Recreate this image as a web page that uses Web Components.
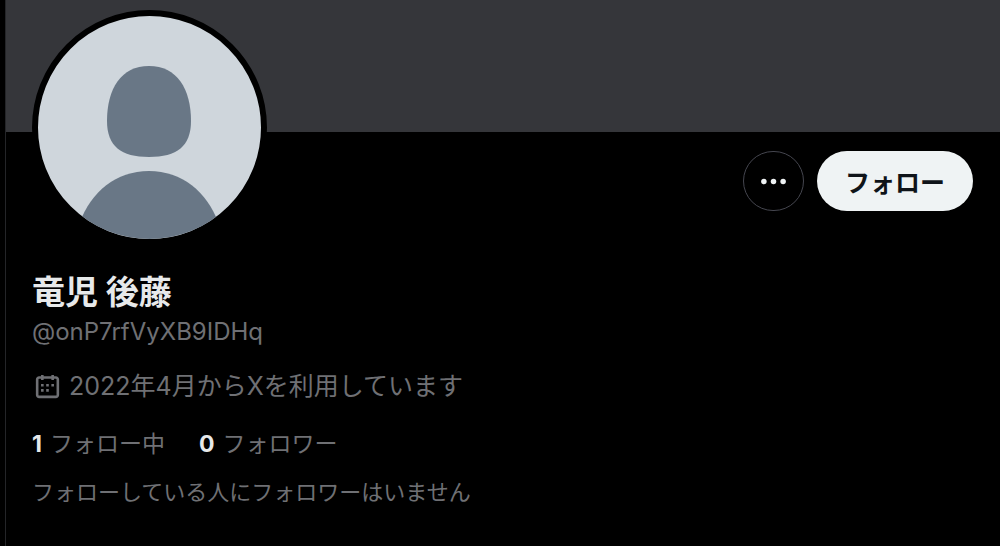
<!DOCTYPE html>
<html lang="ja">
<head>
<meta charset="utf-8">
<meta name="viewport" content="width=device-width, initial-scale=1">
<title>竜児 後藤</title>
<style>
    body {
        margin: 0;
        background: #000;
        color: #e7e9ea;
        font-family: Inter, "Noto Sans CJK JP", sans-serif;
        --muted: #6f7074;
        --line: #242528;
    }
</style>
</head>
<body>
<profile-page>
    <profile-avatar slot="avatar"></profile-avatar>
    <more-button slot="actions"></more-button>
    <follow-button slot="actions">フォロー</follow-button>
    <profile-name slot="info" handle="@onP7rfVyXB9IDHq">竜児 後藤</profile-name>
    <join-date slot="info">2022年4月からXを利用しています</join-date>
    <follow-stats slot="info">
        <follow-count count="1">フォロー中</follow-count>
        <follow-count count="0">フォロワー</follow-count>
    </follow-stats>
    <mutual-note slot="info">フォローしている人にフォロワーはいません</mutual-note>
</profile-page>

<script>
class ProfilePage extends HTMLElement {
    connectedCallback() {
        this.attachShadow({ mode: 'open' });
        this.shadowRoot.innerHTML = `
            <style>
                :host {
                    display: block;
                    min-height: 100vh;
                    box-sizing: border-box;
                    margin-left: 5px;
                    border-left: 1px solid var(--line);
                }
                .banner {
                    height: 132px;
                    background: #35363a;
                }
                .top {
                    display: flex;
                    justify-content: space-between;
                    align-items: flex-start;
                    padding: 0 27px 0 26px;
                }
                /* pull the avatar up over the banner */
                .avatar {
                    margin-top: -122px;
                }
                .actions {
                    display: flex;
                    gap: 13px;
                    padding-top: 19px;
                }
                .info {
                    display: flex;
                    flex-direction: column;
                    padding: 25px 26px 32px;
                }
            </style>
            <main>
                <div class="banner"></div>
                <div class="top">
                    <div class="avatar"><slot name="avatar"></slot></div>
                    <div class="actions"><slot name="actions"></slot></div>
                </div>
                <div class="info"><slot name="info"></slot></div>
            </main>
        `;
    }
}
customElements.define('profile-page', ProfilePage);

class ProfileAvatar extends HTMLElement {
    connectedCallback() {
        this.attachShadow({ mode: 'open' });
        this.shadowRoot.innerHTML = `
            <style>
                :host {
                    display: block;
                    width: 223px;
                    height: 223px;
                    border: 6px solid #000;
                    border-radius: 50%;
                    background: #cfd6dc;
                    overflow: hidden;
                }
                svg {
                    display: block;
                    width: 100%;
                    height: 100%;
                }
            </style>
            <svg viewBox="0 0 223 223" fill="#697786" role="img" aria-label="プロフィール画像">
                <path d="M111 50C139 50 153 73 153 105C153 130 139 141 111 141C83 141 69 130 69 105C69 73 83 50 111 50Z"/>
                <path d="M111 155C144 155 169 176 180 206V223H42V206C53 176 78 155 111 155Z"/>
            </svg>
        `;
    }
}
customElements.define('profile-avatar', ProfileAvatar);

class MoreButton extends HTMLElement {
    connectedCallback() {
        this.attachShadow({ mode: 'open' });
        this.shadowRoot.innerHTML = `
            <style>
                :host {
                    display: block;
                }
                button {
                    display: flex;
                    align-items: center;
                    justify-content: center;
                    width: 61px;
                    height: 60px;
                    padding: 0;
                    border: 1px solid #45464f;
                    border-radius: 30px;
                    background: none;
                    color: #eff3f4;
                    cursor: pointer;
                }
            </style>
            <button type="button" aria-label="もっと見る">
                <svg width="33" height="33" viewBox="0 0 24 24" fill="currentColor" aria-hidden="true">
                    <circle cx="5" cy="12" r="2"/>
                    <circle cx="12" cy="12" r="2"/>
                    <circle cx="19" cy="12" r="2"/>
                </svg>
            </button>
        `;
    }
}
customElements.define('more-button', MoreButton);

class FollowButton extends HTMLElement {
    connectedCallback() {
        this.attachShadow({ mode: 'open' });
        this.shadowRoot.innerHTML = `
            <style>
                :host {
                    display: block;
                }
                button {
                    height: 60px;
                    padding: 0 28px;
                    border: 0;
                    border-radius: 30px;
                    background: #eff3f4;
                    color: #0f1419;
                    font: inherit;
                    font-size: 25px;
                    font-weight: 700;
                    cursor: pointer;
                }
            </style>
            <button type="button"><slot></slot></button>
        `;
    }
}
customElements.define('follow-button', FollowButton);

class ProfileName extends HTMLElement {
    connectedCallback() {
        this.attachShadow({ mode: 'open' });
        this.shadowRoot.innerHTML = `
            <style>
                :host {
                    display: block;
                }
                h1 {
                    margin: 0;
                    font-size: 33px;
                    line-height: 44px;
                    font-weight: 700;
                }
                div {
                    color: var(--muted);
                    font-size: 24px;
                    line-height: 36px;
                }
            </style>
            <h1><slot></slot></h1>
            <div>${this.getAttribute('handle')}</div>
        `;
    }
}
customElements.define('profile-name', ProfileName);

class JoinDate extends HTMLElement {
    connectedCallback() {
        this.attachShadow({ mode: 'open' });
        this.shadowRoot.innerHTML = `
            <style>
                :host {
                    display: flex;
                    align-items: center;
                    gap: 6px;
                    margin-top: 18px;
                    color: var(--muted);
                    font-size: 25px;
                    line-height: 36px;
                }
            </style>
            <svg width="31" height="31" viewBox="0 0 24 24" fill="currentColor" aria-hidden="true">
                <path d="M7 4V3h2v1h6V3h2v1h1.500C19.890 4 21 5.120 21 6.500v12c0 1.380-1.110 2.500-2.500 2.500h-13C4.120 21 3 19.880 3 18.500v-12C3 5.120 4.120 4 5.500 4H7zm0 2H5.500c-.270 0-.500.220-.500.500v12c0 .280.230.500.500.500h13c.280 0 .500-.220.500-.500v-12c0-.280-.220-.500-.500-.500H17v1h-2V6H9v1H7V6zm0 6h2v-2H7v2zm0 4h2v-2H7v2zm4-4h2v-2h-2v2zm0 4h2v-2h-2v2zm4-4h2v-2h-2v2z"/>
            </svg>
            <span><slot></slot></span>
        `;
    }
}
customElements.define('join-date', JoinDate);

class FollowStats extends HTMLElement {
    connectedCallback() {
        this.attachShadow({ mode: 'open' });
        this.shadowRoot.innerHTML = `
            <style>
                :host {
                    display: flex;
                    gap: 34px;
                    margin-top: 22px;
                }
            </style>
            <slot></slot>
        `;
    }
}
customElements.define('follow-stats', FollowStats);

class FollowCount extends HTMLElement {
    connectedCallback() {
        this.attachShadow({ mode: 'open' });
        this.shadowRoot.innerHTML = `
            <style>
                :host {
                    display: block;
                }
                a {
                    display: flex;
                    gap: 8px;
                    color: var(--muted);
                    font-size: 23px;
                    line-height: 36px;
                    text-decoration: none;
                }
                b {
                    color: #e7e9ea;
                    font-weight: 700;
                }
            </style>
            <a href="#"><b>${this.getAttribute('count')}</b><span><slot></slot></span></a>
        `;
    }
}
customElements.define('follow-count', FollowCount);

class MutualNote extends HTMLElement {
    connectedCallback() {
        this.attachShadow({ mode: 'open' });
        this.shadowRoot.innerHTML = `
            <style>
                :host {
                    display: block;
                    margin-top: 14px;
                    color: var(--muted);
                    font-size: 22px;
                    line-height: 32px;
                }
            </style>
            <slot></slot>
        `;
    }
}
customElements.define('mutual-note', MutualNote);
</script>
</body>
</html>
